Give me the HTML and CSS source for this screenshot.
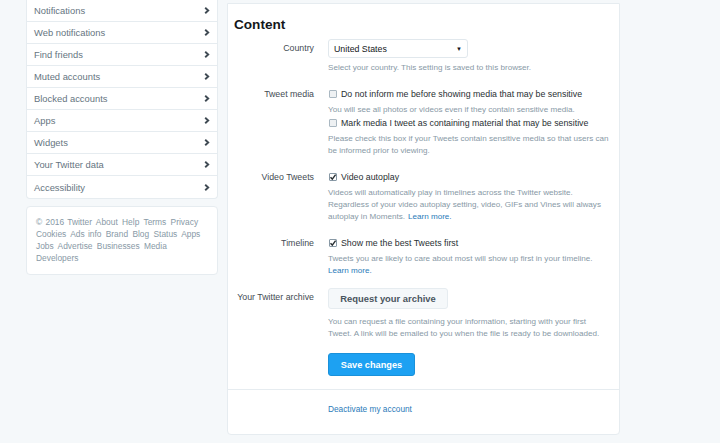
FILE: index.html
```html
<!DOCTYPE html>
<html lang="en">
<head>
    <meta charset="UTF-8">
    <title>Settings - Content</title>
    <link rel="stylesheet" href="styles.css">
</head>
<body>
    <div class="page">
        <div class="sidebar">
            <ul class="nav">
                <li>Notifications <span class="chev"><svg viewBox="0 0 6 7"><path d="M1.2 0.8l3 2.7-3 2.7"/></svg></span></li>
                <li>Web notifications <span class="chev"><svg viewBox="0 0 6 7"><path d="M1.2 0.8l3 2.7-3 2.7"/></svg></span></li>
                <li>Find friends <span class="chev"><svg viewBox="0 0 6 7"><path d="M1.2 0.8l3 2.7-3 2.7"/></svg></span></li>
                <li>Muted accounts <span class="chev"><svg viewBox="0 0 6 7"><path d="M1.2 0.8l3 2.7-3 2.7"/></svg></span></li>
                <li>Blocked accounts <span class="chev"><svg viewBox="0 0 6 7"><path d="M1.2 0.8l3 2.7-3 2.7"/></svg></span></li>
                <li>Apps <span class="chev"><svg viewBox="0 0 6 7"><path d="M1.2 0.8l3 2.7-3 2.7"/></svg></span></li>
                <li>Widgets <span class="chev"><svg viewBox="0 0 6 7"><path d="M1.2 0.8l3 2.7-3 2.7"/></svg></span></li>
                <li>Your Twitter data <span class="chev"><svg viewBox="0 0 6 7"><path d="M1.2 0.8l3 2.7-3 2.7"/></svg></span></li>
                <li>Accessibility <span class="chev"><svg viewBox="0 0 6 7"><path d="M1.2 0.8l3 2.7-3 2.7"/></svg></span></li>
            </ul>
            <div class="footer">
                <span>© 2016 Twitter</span> <span>About</span> <span>Help</span> <span>Terms</span> <span>Privacy</span>
                <span>Cookies</span> <span>Ads info</span> <span>Brand</span> <span>Blog</span> <span>Status</span> <span>Apps</span>
                <span>Jobs</span> <span>Advertise</span> <span>Businesses</span> <span>Media</span>
                <span>Developers</span>
            </div>
        </div>

        <div class="main">
            <div class="section">
                <h2>Content</h2>

                <div class="row">
                    <div class="label label-select">Country</div>
                    <div class="control">
                        <div class="select">United States <span class="arrow">▼</span></div>
                        <p class="help help-select">Select your country. This setting is saved to this browser.</p>
                    </div>
                </div>

                <div class="row">
                    <div class="label">Tweet media</div>
                    <div class="control">
                        <div class="check"><span class="box"></span>Do not inform me before showing media that may be sensitive</div>
                        <p class="help">You will see all photos or videos even if they contain sensitive media.</p>
                        <div class="check"><span class="box"></span>Mark media I tweet as containing material that may be sensitive</div>
                        <p class="help">Please check this box if your Tweets contain sensitive media so that users can be informed prior to viewing.</p>
                    </div>
                </div>

                <div class="row">
                    <div class="label">Video Tweets</div>
                    <div class="control">
                        <div class="check"><span class="box checked"><svg viewBox="0 0 8 8"><path d="M1.5 4.2l1.8 1.9L6.6 1.6"/></svg></span>Video autoplay</div>
                        <p class="help">Videos will automatically play in timelines across the Twitter website. Regardless of your video autoplay setting, video, GIFs and Vines will always autoplay in Moments.<a href="#" class="more">Learn more.</a></p>
                    </div>
                </div>

                <div class="row">
                    <div class="label">Timeline</div>
                    <div class="control">
                        <div class="check"><span class="box checked"><svg viewBox="0 0 8 8"><path d="M1.5 4.2l1.8 1.9L6.6 1.6"/></svg></span>Show me the best Tweets first</div>
                        <p class="help">Tweets you are likely to care about most will show up first in your timeline. <a href="#">Learn more.</a></p>
                    </div>
                </div>

                <div class="row row-archive">
                    <div class="label">Your Twitter archive</div>
                    <div class="control">
                        <button class="btn-archive">Request your archive</button>
                        <p class="help help-archive">You can request a file containing your information, starting with your first Tweet. A link will be emailed to you when the file is ready to be downloaded.</p>
                    </div>
                </div>

                <div class="row row-save">
                    <div class="label"></div>
                    <div class="control">
                        <button class="btn-save">Save changes</button>
                    </div>
                </div>
            </div>

            <div class="section section-bottom">
                <div class="row">
                    <div class="label"></div>
                    <div class="control"><a href="#" class="deactivate">Deactivate my account</a></div>
                </div>
            </div>
        </div>
    </div>
</body>
</html>
```

FILE: styles.css
```css
* {
    margin: 0;
    padding: 0;
    box-sizing: border-box;
}

body {
    font-family: "Liberation Sans", Arial, sans-serif;
    background: #f5f8fa;
    color: #14171a;
    width: 720px;
    height: 443px;
    overflow: hidden;
}

.page {
    display: flex;
    align-items: flex-start;
    gap: 9px;
    padding-left: 26px;
}

/* left column */
.sidebar {
    width: 192px;
}

.nav {
    list-style: none;
    background: #fff;
    border: 1px solid #e6ecf0;
    border-top: none;
    border-radius: 0 0 4px 4px;
}

.nav li {
    height: 22px;
    display: flex;
    align-items: center;
    justify-content: space-between;
    padding: 0 7px 0 7px;
    font-size: 9.4px;
    color: #66757f;
    border-bottom: 1px solid #e6ecf0;
}

.nav li:last-child {
    border-bottom: none;
}

.chev svg {
    display: block;
    width: 6px;
    height: 7px;
    fill: none;
    stroke: #3f4a53;
    stroke-width: 1.9;
}

.footer {
    margin-top: 7px;
    background: #fff;
    border: 1px solid #e6ecf0;
    border-radius: 4px;
    padding: 9px 9px 10px;
    font-size: 8.4px;
    line-height: 12px;
    color: #8899a6;
    word-spacing: 1px;
}

.footer span {
    margin-right: 1px;
    white-space: nowrap;
}

/* main card */
.main {
    width: 393px;
    margin-top: 3px;
    background: #fff;
    border: 1px solid #e6ecf0;
    border-radius: 0 0 4px 4px;
}

.section {
    padding: 13px 8px 13px 6px;
    border-bottom: 1px solid #e6ecf0;
}

.section-bottom {
    border-bottom: none;
    padding: 8px 8px 18px 6px;
}

h2 {
    font-size: 13.6px;
    line-height: 16px;
    font-weight: bold;
    color: #14171a;
    margin-bottom: 6px;
}

.row {
    display: flex;
    gap: 14px;
    margin-bottom: 13px;
}

.row:last-child {
    margin-bottom: 0;
}

.label {
    width: 80px;
    flex-shrink: 0;
    text-align: right;
    font-size: 8.8px;
    line-height: 14px;
    color: #444c53;
    white-space: nowrap;
}

.label-select {
    padding-top: 2px;
}

.control {
    width: 282px;
}

.select {
    width: 140px;
    height: 19px;
    border: 1px solid #e1e8ed;
    border-radius: 3px;
    display: flex;
    align-items: center;
    justify-content: space-between;
    padding: 0 5px 0 5px;
    font-size: 8.8px;
    color: #14171a;
}

.arrow {
    font-size: 6px;
}

.help {
    margin-top: 3px;
    font-size: 8.1px;
    line-height: 12px;
    color: #8899a6;
}

.help-select {
    margin-top: 4px;
}

.help a {
    color: #2b7bb9;
    text-decoration: none;
}

.help a.more {
    margin-left: 3px;
}

.check {
    display: flex;
    align-items: center;
    font-size: 8.8px;
    line-height: 14px;
    color: #292f33;
}

.box {
    width: 8px;
    height: 8px;
    border: 1px solid #aab8c2;
    border-radius: 1px;
    background: #eef1f3;
    margin: 0 4px 0 1px;
    position: relative;
}

.box.checked {
    background: #fff;
    border-color: #8899a6;
}

.box svg {
    position: absolute;
    left: -1px;
    top: -1px;
    width: 8px;
    height: 8px;
    fill: none;
    stroke: #292f33;
    stroke-width: 1.4;
}

.row-archive {
    margin-top: -2px;
    align-items: flex-start;
}

.row-archive .label {
    padding-top: 2px;
}

button {
    font-family: "Liberation Sans", Arial, sans-serif;
    font-weight: bold;
    cursor: pointer;
    border-radius: 3px;
}

.btn-archive {
    width: 120px;
    height: 21px;
    background: #f5f8fa;
    border: 1px solid #e6ecf0;
    color: #4a555e;
    font-size: 9.4px;
    display: block;
}

.help-archive {
    margin-top: 7px;
}

.row-save {
    margin-top: 1px;
}

.btn-save {
    width: 87px;
    height: 23px;
    background: #1da1f2;
    border: 1px solid #1a91da;
    color: #fff;
    font-size: 9.2px;
    display: block;
}

.deactivate {
    font-size: 8.3px;
    line-height: 14px;
    color: #2b7bb9;
    text-decoration: none;
}
```
